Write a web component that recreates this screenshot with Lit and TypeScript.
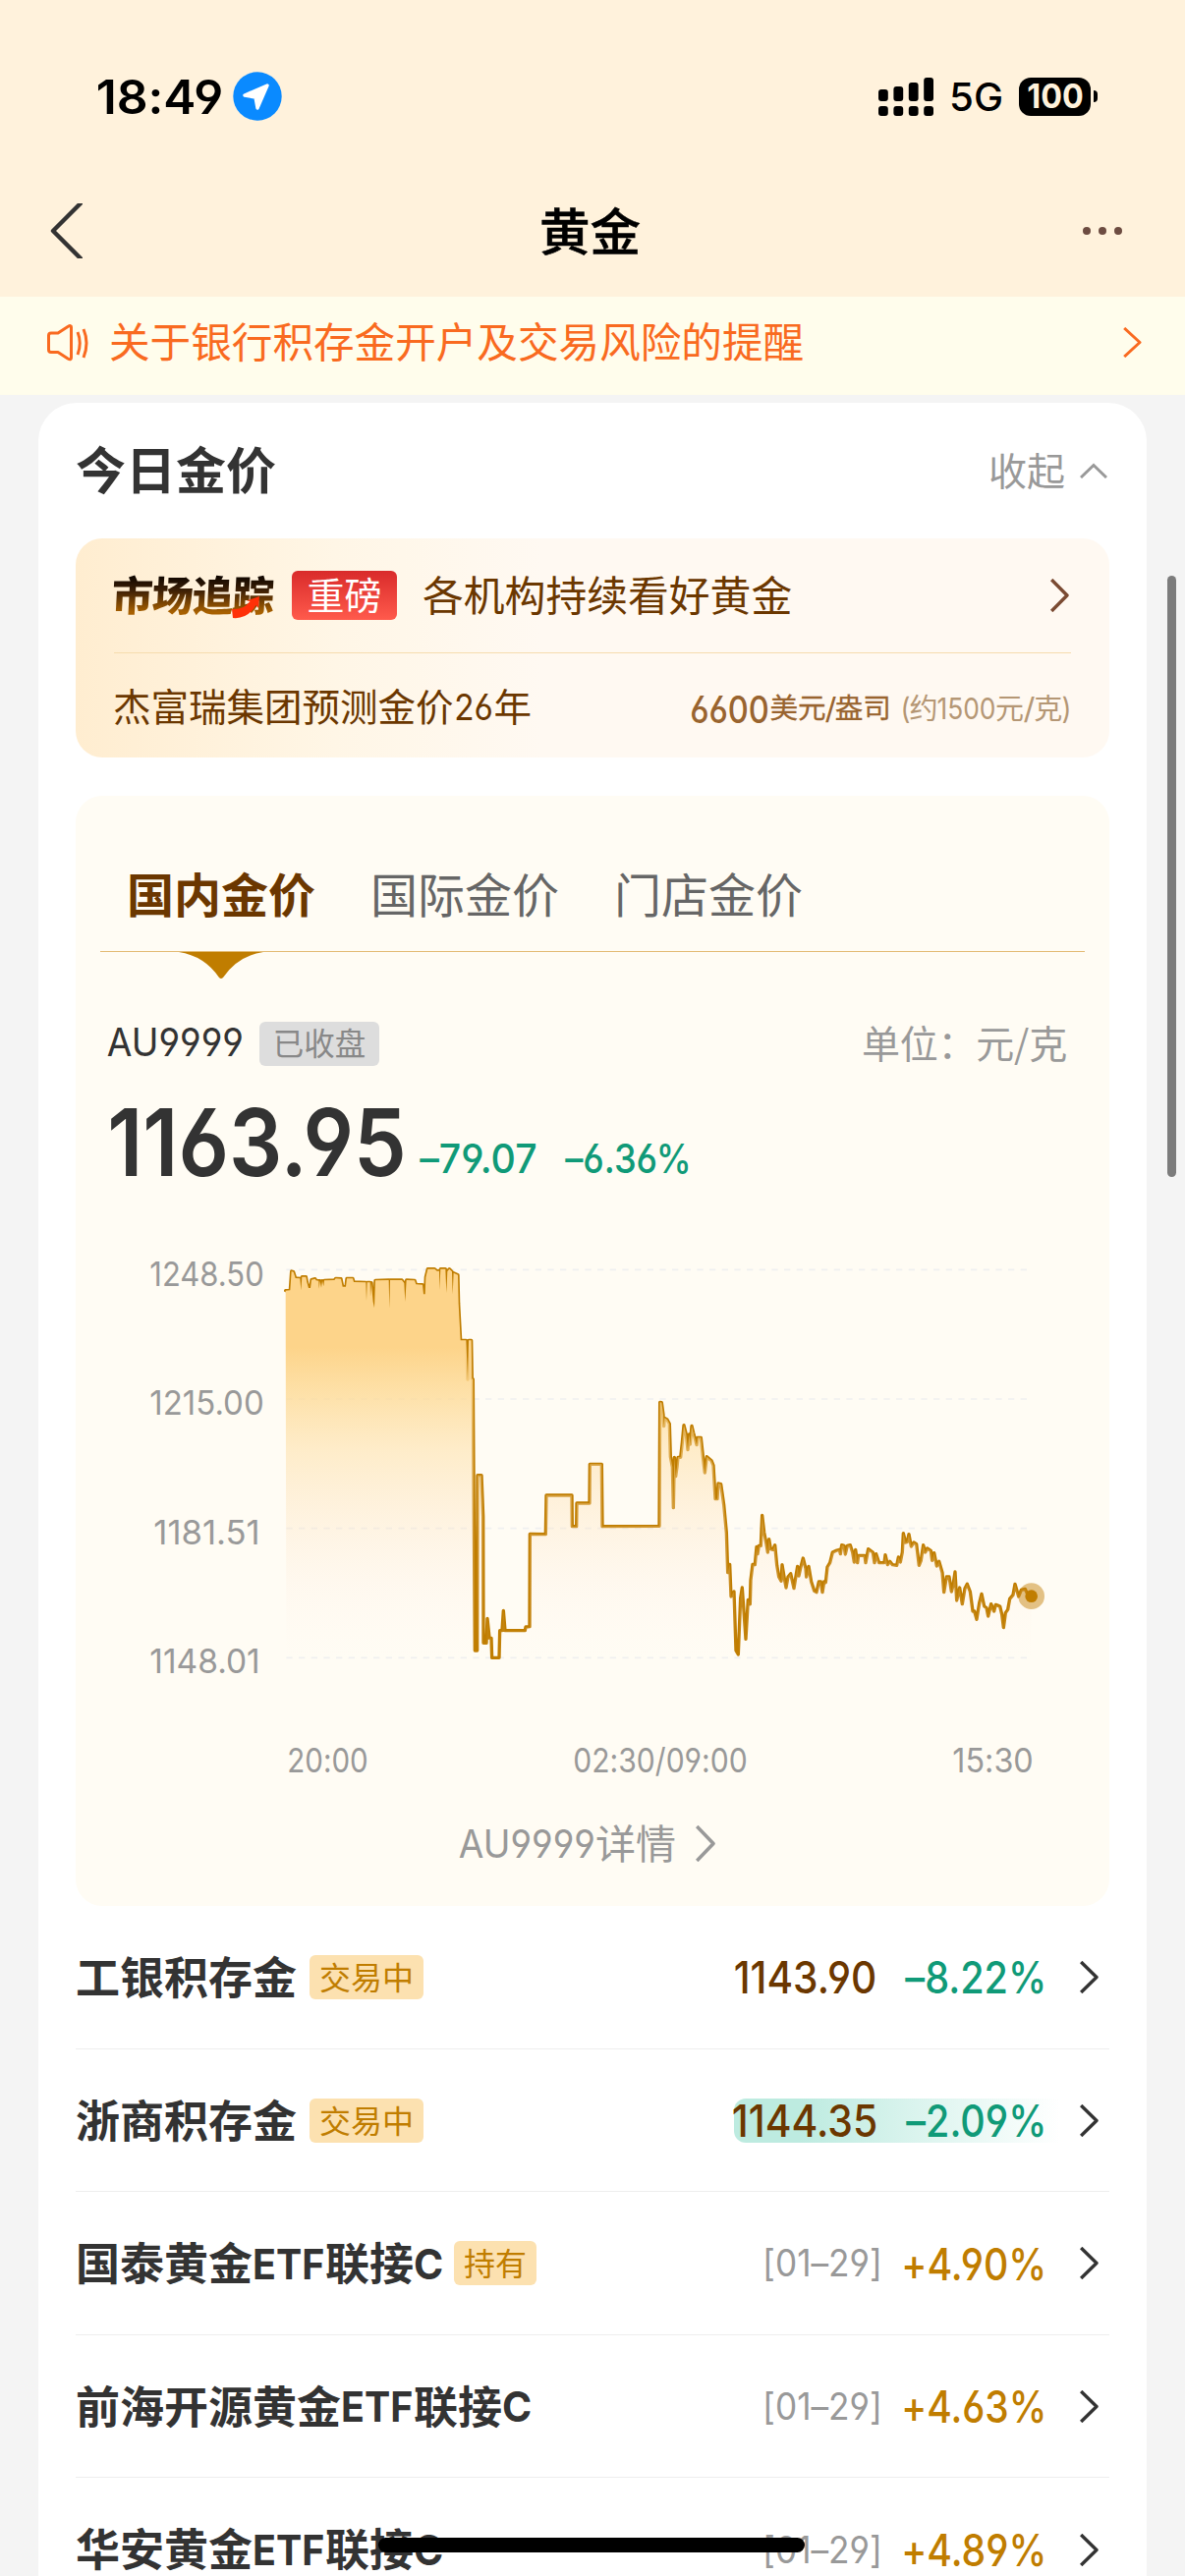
import { LitElement, html, css, svg, nothing } from "lit";
import { customElement, property } from "lit/decorators.js";

/** Price series in plot units (3 units per pixel). */
const NIGHT =
  "62,161 76,160 80,102 86,104 92,123 106,124 109,160 112,119 124,119 127,135 132,153 138,153 141,128 152,125 155,130 163,131 164,155 167,131 171,152 174,131 178,148 180,130 211,129 215,124 231,125 236,149 246,149 249,124 267,124 270,135 307,136 309,192 311,136 320,136 321,180 324,137 329,195 333,214 336,130 377,129 379,215 381,129 417,129 424,138 427,195 431,129 456,130 460,142 480,143 483,172 488,172 490,120 496,95 517,95 524,101 531,101 532,158 535,95 550,95 553,168 556,102 562,95 570,103 572,172 575,107 588,113 590,200 596,313 613,313 618,432 621,313 629,313 631,430 634,432 640,1260 647,1260 648,725 660,725 665,850 666,1237 675,1237 678,1162 684,1221 690,1222 692,1282 714,1282 716,1199 723,1199 727,1138 732,1199 793,1199 795,1188 807,1187 808,904 856,905 858,786 936,786 937,881 950,881 951,810 990,810 991,691 1027,691 1029,881";
const DAY =
  "1203,880 1205,502 1210,503 1215,540 1217,575 1219,550 1227,555 1234,568 1237,668 1243,700 1246,824 1249,670 1253,728 1257,700 1260,670 1268,670 1273,625 1278,572 1285,600 1290,647 1294,600 1297,630 1302,574 1307,595 1317,632 1320,610 1330,610 1337,675 1342,717 1348,668 1362,680 1368,695 1374,797 1380,797 1383,750 1391,752 1400,815 1408,900 1412,1022 1418,997 1422,1095 1431,1080 1437,1260 1444,1272 1451,1100 1456,1068 1461,1140 1467,1225 1474,1105 1480,1118 1482,1045 1488,997 1495,998 1500,943 1503,965 1507,940 1513,940 1517,847 1523,900 1530,935 1534,960 1538,920 1543,950 1550,952 1556,938 1562,1000 1568,1035 1575,1048 1578,998 1584,1035 1590,1068 1596,1035 1604,1025 1614,1070 1625,1003 1629,1032 1635,1005 1642,978 1650,1010 1652,1035 1659,1003 1667,1050 1676,1078 1683,1082 1690,1050 1696,1050 1701,1082 1706,1050 1711,1052 1716,1005 1724,992 1732,960 1745,954 1753,952 1756,965 1760,938 1767,940 1771,966 1777,940 1786,938 1793,960 1798,990 1802,952 1808,992 1811,970 1830,970 1833,992 1841,950 1855,960 1860,992 1865,965 1874,992 1890,992 1893,968 1900,998 1907,988 1915,998 1928,1000 1933,975 1939,990 1945,960 1948,902 1955,930 1960,928 1965,905 1972,942 1980,930 1988,935 1996,1000 2002,985 2009,938 2015,960 2021,948 2032,955 2036,985 2042,962 2050,1002 2057,988 2067,1022 2072,1082 2080,1035 2088,1035 2095,1080 2100,1060 2106,1020 2111,1107 2120,1068 2128,1118 2136,1070 2143,1057 2152,1080 2160,1140 2165,1140 2172,1165 2180,1115 2187,1087 2195,1125 2202,1130 2207,1155 2216,1118 2225,1140 2230,1120 2243,1125 2249,1150 2254,1190 2260,1145 2267,1135 2273,1102 2283,1090 2289,1057 2300,1095 2308,1075 2320,1072 2328,1090 2338,1095";
const SERIES = `${NIGHT} ${DAY}`;

/** Text set to an exact ink width; the box height equals the cap height. */
@customElement("fit-text")
class FitText extends LitElement {
  @property() text = "";
  @property({ type: Number }) w = 100;
  @property({ type: Number }) size = 30;
  @property({ type: Number }) l = 0.05;
  @property({ type: Number }) r = 0.05;
  @property({ type: Number }) weight = 400;

  static styles = css`
    :host { display: inline-block; flex: none; }
    svg { display: block; overflow: visible; }
    text {
      font-family: Inter, Roboto, "Liberation Sans", sans-serif;
      font-feature-settings: "cv03", "cv04", "cv02" 0, "calt" 0;
      fill: currentColor;
      white-space: pre;
    }
  `;

  render() {
    const cap = this.size * 0.727;
    const l = this.l * this.size;
    const r = this.r * this.size;
    return html`<svg width=${this.w} height=${cap}>
      <text x=${-l} y=${cap} font-size=${this.size} font-weight=${this.weight}
        textLength=${this.w + l + r} lengthAdjust="spacingAndGlyphs">${this.text}</text>
    </svg>`;
  }
}

const fit = (text: string, w: number, size: number, weight = 400, l = 0.05, r = 0.05) =>
  html`<fit-text .text=${text} .w=${w} .size=${size} .weight=${weight} .l=${l} .r=${r}></fit-text>`;

const chevron = (w: number, h: number, color: string, stroke = 3.6) => html`
  <svg class="ico" width=${w} height=${h} viewBox="0 0 ${w} ${h}">
    <path d="M1.2 1 L${w - 2} ${h / 2} L1.2 ${h - 1}" fill="none" stroke=${color} stroke-width=${stroke} stroke-linejoin="round" />
  </svg>`;

interface Row {
  name: unknown;
  tag?: string;
  price?: unknown;
  date?: boolean;
  pct: unknown;
  up: boolean;
  flash?: boolean;
}

const Y_LABELS = [
  { t: "1248.50", w: 113, pad: 0 },
  { t: "1215.00", w: 113, pad: 0 },
  { t: "1181.51", w: 105, pad: 4 },
  { t: "1148.01", w: 109, pad: 4 },
];

const etf = () => fit("ETF", 69, 42.5, 700, 0.07, 0.03);
const cee = () => fit("C", 26, 42.5, 700);
const bare = (t: string) => html`<span class="cj">${t}</span>`;
const fund = (t: string) => html`${bare(t)}<i class="s3"></i>${etf()}<i class="s2"></i>${bare("联接")}<i class="s2"></i>${cee()}`;

const ROWS: Row[] = [
  { name: bare("工银积存金"), tag: "交易中", price: fit("1143.90", 141, 45, 500), pct: fit("–8.22%", 144, 45, 500, -0.03, 0.03), up: false },
  { name: bare("浙商积存金"), tag: "交易中", price: fit("1144.35", 144, 45, 500), pct: fit("–2.09%", 143, 45, 500, -0.03, 0.03), up: false, flash: true },
  { name: fund("国泰黄金"), tag: "持有", date: true, pct: fit("+4.90%", 145, 45, 500, 0.04, 0.03), up: true },
  { name: fund("前海开源黄金"), date: true, pct: fit("+4.63%", 145, 45, 500, 0.04, 0.03), up: true },
  { name: fund("华安黄金"), date: true, pct: fit("+4.89%", 145, 45, 500, 0.04, 0.03), up: true },
];

@customElement("app-root")
class AppRoot extends LitElement {
  static styles = css`
    :host {
      display: block;
      position: relative;
      width: 1206px;
      height: 2622px;
      overflow: hidden;
      background: #f4f4f4;
      font-family: "Noto Sans CJK SC", "Noto Sans", sans-serif;
      line-height: 1;
      color: #333;
    }
    * { box-sizing: border-box; }
    i { display: inline-block; flex: none; }
    .s2 { width: 2px; }
    .s3 { width: 3px; }
    .ico { display: block; flex: none; }
    .cj { display: block; margin-top: -0.1em; white-space: nowrap; }
    .row { display: flex; align-items: center; }

    .top { height: 302px; background: #fff2dc; color: #000; }
    .status { height: 170px; padding: 73px 89px 0 100px; display: flex; align-items: flex-start; justify-content: space-between; }
    .status .row { height: 50px; }
    .clock { gap: 12px; }
    .sig .net { margin: 2px 18px 0 17px; }
    .batt { width: 73px; height: 39px; border-radius: 12px; background: #000; color: #fff2dc; justify-content: center; }
    .sig .batt { height: 39px; }
    .nub { width: 4px; height: 12px; margin-left: 3px; border-radius: 0 4px 4px 0; background: #000; }
    .nav { height: 130px; padding: 0 64px 0 50px; justify-content: space-between; }
    .nav .cj { font-size: 51.5px; font-weight: 500; -webkit-text-stroke: 0.5px #000; margin-left: 15px; }

    .notice { height: 100px; padding: 0 44px 7px 47px; background: #fffdec; color: #f96a20; }
    .notice .cj { font-size: 41.6px; margin-left: 21px; flex: 1; }

    .card { margin: 8px 39px 0; height: 2300px; border-radius: 39px 39px 0 0; background: #fff; padding: 0 38px; }
    .head { height: 138px; justify-content: space-between; padding: 0 2px 0 0; }
    .head .ttl { font-size: 51px; font-weight: 600; }
    .fold { color: #999; font-size: 39px; gap: 15px; }

    .banner { height: 223px; border-radius: 27px; padding: 0 39px; color: #6b3700; background: linear-gradient(90deg, #ffedd0, #fff6e6 25%, #fff9f2 45%, #fff9f2); }
    .b1 { height: 117px; border-bottom: 1.5px solid #f5dcae; }
    .logo { position: relative; width: 164px; height: 46px; }
    .logo .cj {
      font-size: 42px; font-weight: 900; letter-spacing: -1px; line-height: 48px; height: 48px; margin: -3px 0 0 -2px;
      background: linear-gradient(#0d0500 12%, #3f2106 45%, #a86000 90%);
      -webkit-background-clip: text; background-clip: text; color: transparent;
      transform: skewX(-3deg);
    }
    .logo svg { position: absolute; left: 120px; top: 24px; }
    .hot { width: 107px; height: 50px; margin-left: 17px; border-radius: 6px; background: linear-gradient(#d92b2b, #ff5a4c); color: #fff; font-size: 38px; justify-content: center; }
    .b1 .lead { font-size: 41.8px; margin-left: 26px; flex: 1; margin-top: -0.06em; }
    .b1 .end { margin-right: 2px; }
    .b2 { height: 106px; justify-content: space-between; padding: 2px 1px 0 0; font-size: 38.5px; }
    .b2 .say { gap: 2.5px; margin-left: -1px; }
    .oz { margin-right: 2px; color: #99642f; }
    .usd { color: #99642f; font-size: 28.6px; padding-top: 4px; -webkit-text-stroke: 0.3px #99642f; }
    .cny { color: #b59775; font-size: 29px; margin-left: 11px; padding-top: 4px; gap: 0.7px; }

    .gold { height: 1130px; margin-top: 39px; border-radius: 27px; background: #fffcf4; padding: 0 25px; }
    .tabs { height: 159px; padding: 43px 0 0 27px; border-bottom: 1.5px solid #e3bb74; gap: 56px; font-size: 48px; color: #666; }
    .tabs .on { color: #6b3700; font-weight: 700; }
    .ind { display: block; margin-left: 80px; }
    .meta { height: 46px; margin-top: 43px; padding: 0 18px 0 8px; }
    .code { padding-bottom: 3px; }
    .closed { width: 122px; height: 45px; margin-left: 18px; border-radius: 6px; background: #ddd; color: #888; font-size: 31.5px; justify-content: center; }
    .unit { margin-left: auto; color: #999; font-size: 39px; letter-spacing: -0.2px; }
    .quote { display: flex; align-items: flex-end; height: 69px; margin: 43px 0 0 11px; color: #333; }
    .quote .g { display: flex; gap: 29px; margin: 0 0 3px 17px; color: #109a78; }
    .chart { display: flex; margin-top: 83px; height: 420px; color: #999; }
    .ys { width: 165px; height: 420px; display: flex; flex-direction: column; align-items: flex-end; gap: 106.7px; padding-top: 4px; }
    .ys span { display: flex; }
    .plot { display: block; margin-left: 18px; overflow: visible; }
    .xs { display: flex; justify-content: space-between; margin: 79px 54px 0 192px; color: #999; }
    .more { justify-content: center; height: 44px; margin-top: 51px; font-size: 41px; color: #999; padding-right: 10px; }
    .more .cj { margin-left: 2px; }
    .more .end { margin-left: 20px; }

    .item { height: 145.6px; border-bottom: 1.5px solid #eee; padding: 1px 11px 0 0; }
    .item .nm { font-size: 45px; font-weight: 600; }
    .tag { height: 45px; padding: 0 10px; margin-left: 13px; border-radius: 6px; background: #fce1b0; color: #c07d00; font-size: 32px; }
    .val { height: 45px; margin-left: auto; padding-right: 15px; color: #109a78; }
    .val.up { color: #c07d00; }
    .val.flash { background: linear-gradient(90deg, #bdebe0 20%, #fff); border-radius: 12px 0 0 12px; }
    .p { color: #6b3700; margin-right: 30px; height: 33px; display: flex; }
    .d { color: #999; margin-right: 23px; height: 29px; display: flex; }
    .go { margin-left: 20px; }

    .scroll { position: absolute; left: 1188px; top: 586px; width: 9px; height: 612px; border-radius: 5px; background: #7c7c7c; }
    .home { position: absolute; left: 385px; top: 2583px; width: 434px; height: 15px; border-radius: 8px; background: #000; }
  `;

  private status() {
    return html`<div class="status">
      <div class="row clock">
        ${fit("18:49", 125, 47.5, 600)}
        <svg class="ico" width="50" height="50" viewBox="0 0 50 50">
          <circle cx="25" cy="25" r="24.7" fill="#0a8aff" />
          <path d="M35 14 L12 24 L23 26 L25 37 Z" fill="#fff" stroke="#fff" stroke-width="3.4" stroke-linejoin="round" />
        </svg>
      </div>
      <div class="row sig">
        <svg class="ico" width="57" height="39" viewBox="0 0 57 39">
          ${[12, 9, 5, 0].map((y, i) => svg`
            <rect x=${i * 15.4} y=${y} width="9.8" height=${24 - y} rx="3" />
            <rect x=${i * 15.4} y="29" width="9.8" height="10" rx="3" />`)}
        </svg>
        <span class="net">${fit("5G", 51, 40, 450)}</span>
        <div class="row batt">${fit("100", 54, 34.5, 700)}</div>
        <i class="nub"></i>
      </div>
    </div>`;
  }

  private chart() {
    return html`<div class="chart">
      <div class="ys">
        ${Y_LABELS.map((y) => html`<span style="padding-right:${y.pad}px">${fit(y.t, y.w, 34)}</span>`)}
      </div>
      <svg class="plot" width="783" height="420" viewBox="45 60 2349 1260">
        <defs>
          <linearGradient id="area" gradientUnits="userSpaceOnUse" x1="0" y1="95" x2="0" y2="1290">
            <stop offset="0" stop-color="#fdd48a" />
            <stop offset="0.2" stop-color="#fdd48a" />
            <stop offset="0.33" stop-color="#fdd993" stop-opacity="0.75" />
            <stop offset="0.46" stop-color="#fddc9e" stop-opacity="0.5" />
            <stop offset="0.68" stop-color="#fddfb8" stop-opacity="0.26" />
            <stop offset="0.84" stop-color="#fde6d8" stop-opacity="0.13" />
            <stop offset="1" stop-color="#fdf0e8" stop-opacity="0" />
          </linearGradient>
        </defs>
        ${[97, 492, 887, 1282].map((y) => svg`
          <line x1="64" x2="2338" y1=${y} y2=${y} stroke="#f0f0f0" stroke-width="5" stroke-dasharray="19 19" />`)}
        <polyline points=${SERIES} fill="none" stroke="#c07d00" stroke-width="10" stroke-linejoin="round" stroke-linecap="round" />
        <polygon points="64,1290 ${SERIES} 2338,1290" fill="url(#area)" />
        <circle cx="2339" cy="1094" r="40" fill="#c4820a" fill-opacity="0.48" />
        <circle cx="2339" cy="1094" r="19" fill="#c07d00" />
      </svg>
    </div>
    <div class="xs">
      ${fit("20:00", 79, 34)}${fit("02:30/09:00", 174, 34)}${fit("15:30", 79, 34)}
    </div>`;
  }

  private item(r: Row) {
    return html`<div class="row item">
      <div class="row nm">${r.name}</div>
      ${r.tag ? html`<div class="row tag"><span class="cj">${r.tag}</span></div>` : nothing}
      <div class="row val ${r.up ? "up" : ""} ${r.flash ? "flash" : ""}">
        ${r.price ? html`<span class="p">${r.price}</span>` : nothing}
        ${r.date ? html`<span class="d">${fit("[01–29]", 118, 38, 400)}</span>` : nothing}
        ${r.pct}
      </div>
      <span class="go">${chevron(19, 33, "#333", 3.4)}</span>
    </div>`;
  }

  render() {
    return html`
      <div class="top">
        ${this.status()}
        <div class="row nav">
          <svg class="ico" width="34" height="56" viewBox="0 0 34 56">
            <path d="M34 -2 L4 28 L34 58" fill="none" stroke="#333" stroke-width="4.4" stroke-linejoin="round" />
          </svg>
          <span class="cj">黄金</span>
          <svg class="ico" width="40" height="8" viewBox="0 0 40 8" fill="#6d4c41">
            <circle cx="4" cy="4" r="4" /><circle cx="20" cy="4" r="4" /><circle cx="36" cy="4" r="4" />
          </svg>
        </div>
      </div>
      <div class="row notice">
        <svg class="ico" width="43" height="40" viewBox="0 0 43 40" fill="none" stroke="#f96a20" stroke-width="3" stroke-linejoin="round" stroke-linecap="round">
          <path d="M5 10 H12 L22 3.5 Q25.5 1.5 25.5 4 V35 Q25.5 38 22 36 L12 29.5 H5 Q2.5 29.5 2.5 27 V12.5 Q2.5 10 5 10 Z" />
          <path d="M32 9 Q36.5 20 32 32 M38 6 Q44 20 38 35" stroke-linecap="butt" />
        </svg>
        <span class="cj">关于银行积存金开户及交易风险的提醒</span>
        ${chevron(19, 31, "#f96a20", 3)}
      </div>
      <div class="card">
        <div class="row head">
          <span class="cj ttl">今日金价</span>
          <div class="row fold">
            <span class="cj">收起</span>
            <svg class="ico" width="28" height="16" viewBox="0 0 28 16"><path d="M1 15 L14 2.5 L27 15" fill="none" stroke="#999" stroke-width="3" /></svg>
          </div>
        </div>
        <div class="banner">
          <div class="row b1">
            <div class="logo">
              <span class="cj">市场追踪</span>
              <svg width="30" height="23" viewBox="0 0 30 23">
                <path d="M0 13 Q12 14 18.5 5 L15 4.5 L28 0 L27 12 L24.5 9 Q16 23.5 1 22 Z" fill="#ff3008" />
              </svg>
            </div>
            <div class="row hot"><span class="cj">重磅</span></div>
            <span class="cj lead">各机构持续看好黄金</span>
            <span class="end">${chevron(19, 34, "#7a4a32", 3.4)}</span>
          </div>
          <div class="row b2">
            <div class="row say"><span class="cj">杰富瑞集团预测金价</span>${fit("26", 36, 37, 400)}<span class="cj">年</span></div>
            <div class="row">
              <span class="oz">${fit("6600", 77, 37.5, 450)}</span>
              <div class="row usd"><span class="cj">美元</span>${fit("/", 9, 30, 400)}<span class="cj">盎司</span></div>
              <div class="row cny">${fit("(", 7, 30)}<span class="cj">约</span>${fit("1500", 57, 30)}<span class="cj">元</span>${fit("/", 9, 30)}<span class="cj">克</span>${fit(")", 7, 30)}</div>
            </div>
          </div>
        </div>
        <div class="gold">
          <div class="row tabs">
            <span class="cj on">国内金价</span><span class="cj">国际金价</span><span class="cj">门店金价</span>
          </div>
          <svg class="ind" width="86" height="27" viewBox="0 0 86 27"><path d="M0 0 H86 Q60 4 45 26 Q43 28 41 26 Q26 4 0 0 Z" fill="#c07d00" /></svg>
          <div class="row meta">
            <span class="code">${fit("AU9999", 136, 39.5, 400, 0.03, 0.05)}</span>
            <div class="row closed"><span class="cj">已收盘</span></div>
            <span class="cj unit">单位：元/克</span>
          </div>
          <div class="quote">
            ${fit("1163.95", 296, 95, 560, 0.04, 0.05)}
            <div class="g">${fit("–79.07", 119, 41, 500, -0.03, 0.04)}${fit("–6.36%", 129, 41, 500, -0.03, 0.02)}</div>
          </div>
          ${this.chart()}
          <div class="row more">
            ${fit("AU9999", 136, 39.5, 400, 0.03, 0.05)}<span class="cj">详情</span>
            <span class="end">${chevron(20, 37, "#999")}</span>
          </div>
        </div>
        ${ROWS.map((r) => this.item(r))}
      </div>
      <i class="scroll"></i>
      <i class="home"></i>
    `;
  }
}
